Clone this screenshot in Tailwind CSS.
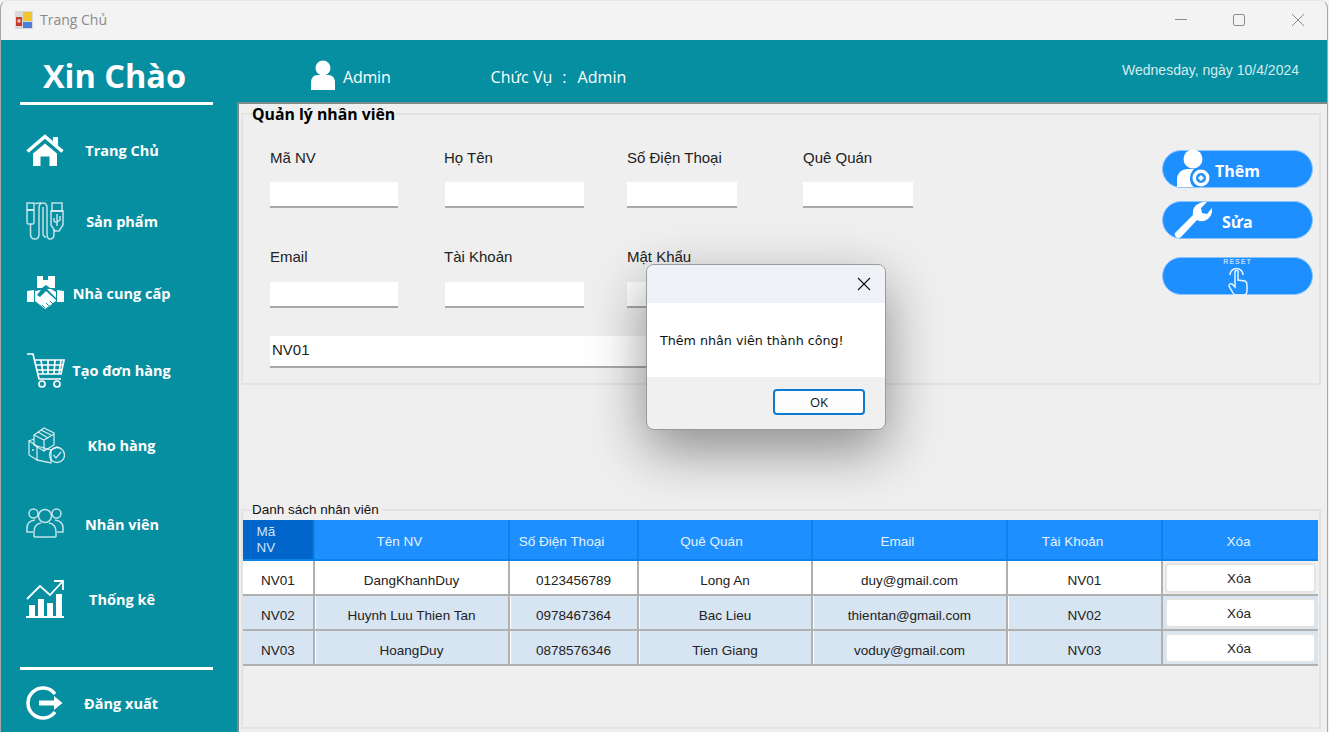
<!DOCTYPE html>
<html lang="vi">
<head>
<meta charset="utf-8">
<title>Trang Chủ</title>
<script src="https://cdn.jsdelivr.net/npm/@tailwindcss/browser@4"></script>
</head>
<body class="w-[1329px] h-[732px] overflow-hidden bg-[#f3f3f3] font-['Liberation_Sans',Arial,sans-serif]">
<div class="relative w-[1329px] h-[732px] overflow-hidden">
  <div class="flex flex-col w-[1328px] h-[740px] bg-[#f3f3f3] rounded-t-[8px] border-l border-r border-t border-l-[#a8a8a8] border-r-[#a8a8a8] border-t-[#e6e6e6]">
    <!-- title bar -->
    <div class="flex items-center h-[39px] shrink-0 pl-[14px] pb-[2px]">
      <svg class="w-[18px] h-[18px]" viewBox="0 0 18 18"><rect width="18" height="18" fill="#d9d9d9"/><rect x="1" y="6" width="6" height="9" fill="#c83a2e"/><rect x="2.500" y="8.500" width="3" height="3" fill="#f0d0c0"/><rect x="8" y="1" width="9" height="9" fill="#f3c52b"/><rect x="8" y="11" width="9" height="6" fill="#4d7fd6"/></svg>
      <span class="ml-[7px] text-[14px] text-[#8a8a8a] font-['Open_Sans',sans-serif]">Trang Chủ</span>
      <div class="ml-auto flex items-center">
        <svg class="w-[14px] h-[14px] mr-[44px]" viewBox="0 0 14 14"><path d="M1 6.500H13" stroke="#8a8a8a" stroke-width="1"/></svg>
        <svg class="w-[14px] h-[14px] mr-[45px]" viewBox="0 0 14 14"><rect x="1.500" y="1.500" width="11" height="11" rx="1.500" fill="none" stroke="#8a8a8a"/></svg>
        <svg class="w-[14px] h-[14px] mr-[22px]" viewBox="0 0 14 14"><path d="M1 1L13 13M13 1L1 13" stroke="#8a8a8a" stroke-width="1"/></svg>
      </div>
    </div>
    <div class="flex flex-1 min-h-0">
      <!-- sidebar -->
      <aside class="w-[236px] shrink-0 bg-[#068ea1] text-white flex flex-col items-stretch">
        <div class="h-[65px] ml-[19px] w-[193px] border-b-[3px] border-white flex items-center justify-center shrink-0 pr-[4px]">
          <span class="text-[32.500px] leading-none font-bold font-['Open_Sans',sans-serif] pt-[10px]">Xin Chào</span>
        </div>
        <div class="flex items-center h-[40px] pl-[25px] mt-[25px]">
          <svg class="w-[38px] h-[38px] shrink-0" viewBox="0 0 38 38" fill="#fff"><path d="M1.500 20.500L19 5.500L36.500 20.500" fill="none" stroke="#fff" stroke-width="3.600"/><rect x="27" y="6" width="5" height="8"/><path d="M7 22.500L19 12.500L31 22.500V35H23.500V25.500H14.500V35H7Z"/></svg>
          <span class="w-[116px] mt-[2px] text-center text-[14.500px] font-bold font-['Open_Sans',sans-serif]">Trang Chủ</span>
        </div>
        <div class="flex items-center h-[40px] pl-[25px] mt-[31px]">
          <svg class="w-[38px] h-[38px] shrink-0" viewBox="0 0 38 38" fill="none" stroke="#fff" stroke-opacity=".75" stroke-width="1.500"><rect x="1" y="1" width="7" height="7"/><rect x="1" y="8" width="7" height="14" rx="1.500"/><path d="M4.500 22V32Q4.500 37 9 37Q13 37 13 32V6Q13 1 17 1Q21 1 21 6V32Q21 37 24 37Q28 37 28 32V28"/><path d="M9 1.500Q13 1 15 1M17 5V31Q17 35 20 35"/><rect x="26" y="1" width="10" height="8"/><path d="M25 9H37V23L33 29H29L25 23Z"/><path d="M31 12V24M28 16V19L31 21M34 14V18L31 20"/></svg>
          <span class="w-[116px] mt-[2px] text-center text-[14.500px] font-bold font-['Open_Sans',sans-serif]">Sản phẩm</span>
        </div>
        <div class="flex items-center h-[40px] pl-[26px] mt-[32px]">
          <svg class="w-[37px] h-[38px] shrink-0" viewBox="0 0 37 38" fill="#fff"><path d="M10 2H28V14H23L19 11L15 14H10Z"/><rect x="16" y="2" width="5" height="4" fill="#068ea1"/><path d="M0 17L7 16V28H0Z"/><path d="M30 16L37 17V28H30Z"/><path d="M8 17L14 16L10 21L13 23L19 17L29 26V27L26 29L24 31L21 33L18 35L13 31L8 27Z"/><path d="M20 15H24L29 18V24L20 15Z"/><path d="M15 31L18 34M19 29L22 32M23 27L26 30" stroke="#068ea1" stroke-width="1"/></svg>
          <span class="w-[117px] mt-[2px] -ml-[1px] text-center text-[14.500px] font-bold font-['Open_Sans',sans-serif]">Nhà cung cấp</span>
        </div>
        <div class="flex items-center h-[40px] pl-[25px] mt-[37px]">
          <svg class="w-[40px] h-[38px] shrink-0" viewBox="0 0 40 38" fill="none" stroke="#fff" stroke-width="1.700"><path d="M1 3H7L13 28H35"/><path d="M9 9H38L35 23H12"/><path d="M15 9L17 23M22 9V23M29 9L28 23M35 9L33 23M10 14H37M11 19H36"/><circle cx="16" cy="33" r="3"/><circle cx="31" cy="33" r="3"/></svg>
          <span class="w-[111px] mt-[2px] text-center text-[14.500px] font-bold font-['Open_Sans',sans-serif]">Tạo đơn hàng</span>
        </div>
        <div class="flex items-center h-[40px] pl-[26px] mt-[35px]">
          <svg class="w-[38px] h-[38px] shrink-0" viewBox="0 0 38 38" fill="none" stroke="#fff" stroke-opacity=".8" stroke-width="1.300"><path d="M7 9L17 2L27 7V19L17 25L7 19Z"/><path d="M7 9L17 14L27 8M17 14V25M11 6L21 12M14 4L24 9"/><path d="M2 15L10 20V34L2 29Z"/><path d="M10 20L24 24V37L10 34M2 15L7 13M5 24H7"/><circle cx="30" cy="29" r="7.500"/><path d="M26.500 29L29 32L34 26"/><path d="M24 24L30 21L33 22"/></svg>
          <span class="w-[113px] mt-[2px] text-center text-[14.500px] font-bold font-['Open_Sans',sans-serif]">Kho hàng</span>
        </div>
        <div class="flex items-center h-[40px] pl-[25px] mt-[38px]">
          <svg class="w-[38px] h-[38px] shrink-0" viewBox="0 0 38 38" fill="none" stroke="#fff" stroke-opacity=".75" stroke-width="1.500"><circle cx="19" cy="12" r="6.500"/><path d="M8 33V28Q8 20 15 19M30 33V28Q30 20 23 19M8 33H30"/><circle cx="7.500" cy="9.500" r="4.500"/><circle cx="30.500" cy="9.500" r="4.500"/><path d="M9 16Q1 17 1 24V28H7M29 16Q37 17 37 24V28H31"/></svg>
          <span class="w-[116px] mt-[3px] text-center text-[14.500px] font-bold font-['Open_Sans',sans-serif]">Nhân viên</span>
        </div>
        <div class="flex items-center h-[40px] pl-[25px] mt-[36px]">
          <svg class="w-[38px] h-[38px] shrink-0" viewBox="0 0 38 38" fill="#fff"><path d="M1 19L14 6L24 15L36 2" fill="none" stroke="#fff" stroke-width="1.800"/><path d="M28 1H37V10" fill="none" stroke="#fff" stroke-width="1.800"/><rect x="3" y="25" width="6" height="11"/><rect x="12" y="19" width="6" height="17"/><rect x="21" y="23" width="6" height="13"/><rect x="30" y="14" width="6" height="22"/><rect y="36" width="38" height="2"/></svg>
          <span class="w-[116px] mt-[2px] text-center text-[14.500px] font-bold font-['Open_Sans',sans-serif]">Thống kê</span>
        </div>
        <div class="ml-[19px] w-[193px] h-[3px] bg-white mt-[48px] shrink-0"></div>
        <div class="flex items-center h-[40px] pl-[25px] mt-[13px]">
          <svg class="w-[38px] h-[38px] shrink-0" viewBox="0 0 38 38" fill="none" stroke="#fff" stroke-width="3.500"><path d="M29 10A15 15 0 1 0 29 28"/><path d="M13 19H32" stroke-width="5"/><path d="M28 12L36.500 19L28 26Z" fill="#fff" stroke="none"/></svg>
          <span class="w-[114px] mt-[2px] text-center text-[14.500px] font-bold font-['Open_Sans',sans-serif]">Đăng xuất</span>
        </div>
      </aside>
      <!-- main column -->
      <main class="flex-1 min-w-0 flex flex-col bg-[#efefef] border-l-2 border-[#7d8a8d]">
        <header class="h-[64px] shrink-0 -ml-[2px] bg-[#068ea1] border-b-2 border-[#7d8a8d] flex items-center text-white pl-[74px] pr-[28px]">
          <svg class="w-[24px] h-[30px] mt-[7px] shrink-0" viewBox="0 0 24 30" fill="#fff"><circle cx="12" cy="8" r="7.500"/><path d="M0 30V23Q0 15 7 15H17Q24 15 24 23V30Z"/></svg>
          <span class="ml-[8px] text-[16px] font-['Open_Sans',sans-serif] tracking-[-0.2px] mt-[11px]">Admin</span>
          <span class="ml-[100px] text-[16px] font-['Open_Sans',sans-serif] mt-[11px]">Chức Vụ<span class="ml-[10px]">:</span></span>
          <span class="ml-[11px] text-[16px] font-['Open_Sans',sans-serif] tracking-[0.1px] mt-[11px]">Admin</span>
          <span class="ml-auto text-[14px] text-[#d5ecef] -mt-[2px]">Wednesday, ngày 10/4/2024</span>
        </header>
        <!-- form group -->
        <fieldset class="ml-[2px] w-[1080px] h-[281px] border-2 border-[#e3e3e3] shrink-0">
          <legend class="ml-[9px] pr-[1px] h-[20px] leading-[20px] text-[15.800px] font-bold text-black font-['Open_Sans',sans-serif]">Quản lý nhân viên</legend>
          <div class="flex">
            <div class="pl-[27px] pt-[24px] text-[15px] text-[#222]">
              <div class="flex">
                <div class="w-[128px]"><div class="h-[20px] leading-[20px]">Mã NV</div><input class="mt-[14px] block w-full h-[26px] bg-white border-b-2 border-[#a8a8a8] outline-none"></div>
                <div class="w-[139px] ml-[47px]"><div class="h-[20px] leading-[20px] -ml-[1px]">Họ Tên</div><input class="mt-[14px] block w-full h-[26px] bg-white border-b-2 border-[#a8a8a8] outline-none"></div>
                <div class="w-[110px] ml-[43px]"><div class="h-[20px] leading-[20px]">Số Điện Thoại</div><input class="mt-[14px] block w-full h-[26px] bg-white border-b-2 border-[#a8a8a8] outline-none"></div>
                <div class="w-[110px] ml-[66px]"><div class="h-[20px] leading-[20px]">Quê Quán</div><input class="mt-[14px] block w-full h-[26px] bg-white border-b-2 border-[#a8a8a8] outline-none"></div>
              </div>
              <div class="flex mt-[39px]">
                <div class="w-[128px]"><div class="h-[20px] leading-[20px]">Email</div><input class="mt-[15px] block w-full h-[26px] bg-white border-b-2 border-[#a8a8a8] outline-none"></div>
                <div class="w-[139px] ml-[47px]"><div class="h-[20px] leading-[20px] -ml-[1px]">Tài Khoản</div><input class="mt-[15px] block w-full h-[26px] bg-white border-b-2 border-[#a8a8a8] outline-none"></div>
                <div class="w-[110px] ml-[43px]"><div class="h-[20px] leading-[20px]">Mật Khẩu</div><input class="mt-[15px] block w-full h-[26px] bg-white border-b-2 border-[#a8a8a8] outline-none"></div>
              </div>
              <input value="NV01" class="mt-[28px] block w-[440px] h-[32px] pl-[2px] pb-[4px] bg-white border-b-2 border-[#a8a8a8] outline-none text-[#222]">
            </div>
            <div class="ml-auto mr-[6px] pt-[26px] flex flex-col text-white">
              <div class="w-[151px] h-[38px] rounded-full bg-[#1e8fff] border border-[#8cc4ff] flex items-center overflow-visible pl-[13px]">
                <svg class="w-[36px] h-[40px] shrink-0" viewBox="0 0 36 40" fill="#fff"><circle cx="17" cy="10" r="9.500"/><path d="M1 38V31Q1 21 11 20H18Q14 24 14 30Q14 35 18 38Z"/><circle cx="25" cy="29" r="8.500"/><circle cx="25" cy="29" r="5" fill="#1e8fff"/><path d="M23.800 26.500H26.200V27.800H27.500V30.200H26.200V31.500H23.800V30.200H22.500V27.800H23.800Z"/></svg>
                <span class="ml-[3px] text-[16px] font-bold font-['Open_Sans',sans-serif] mt-[3px]">Thêm</span>
              </div>
              <div class="w-[151px] h-[38px] mt-[13px] rounded-full bg-[#1e8fff] border border-[#8cc4ff] flex items-center pl-[11px]">
                <svg class="w-[38px] h-[38px] shrink-0" viewBox="0 0 38 38" fill="#fff"><path d="M1 32L19 14Q18 6 24 3Q29 0 33 1L27 7L28 12L33 13L38 7Q39 14 34 18Q28 22 23 19L7 36Q4 38 2 36Q0 34 1 32Z"/></svg>
                <span class="ml-[10px] text-[16px] font-bold font-['Open_Sans',sans-serif] mt-[3px]">Sửa</span>
              </div>
              <div class="relative w-[151px] h-[38px] mt-[18px] rounded-full bg-[#1e8fff] border border-[#8cc4ff] flex flex-col items-center">
                <span class="absolute top-[0px] text-[7px] leading-[8px] font-bold tracking-[1px] text-[#bcdcff]">RESET</span>
                <svg class="absolute top-[8px] w-[22px] h-[30px]" viewBox="0 0 22 30" fill="none" stroke="#e8f4ff" stroke-width="1.500"><path d="M3 9A6.500 6.500 0 0 1 16 9"/><path d="M8 13V5.500Q9.500 3 11 5.500V14L18 15Q20 16 20 19V25Q20 29 16 29H9Q7 29 6 27L2 20Q2 17 5 18L8 21Z"/></svg>
              </div>
            </div>
          </div>
        </fieldset>
        <!-- list group -->
        <fieldset class="ml-[2px] mt-[115px] w-[1080px] h-[229px] border-2 border-[#e3e3e3] shrink-0">
          <legend class="ml-[9px] pr-[2px] h-[20px] leading-[20px] text-[13.500px] text-[#111]">Danh sách nhân viên</legend>
          <div class="grid grid-cols-[70px_195px_129px_174px_195px_155px_157px] w-[1075px] text-[13.500px] text-[#222] text-center">
            <div class="h-[41px] bg-[#0066cc] text-[#cfe3f7] leading-[16px] pt-[4px] pr-[24px] border-b-2 border-[#0a84e8]">Mã<br>NV</div>
            <div class="h-[41px] bg-[#1e8fff] text-[#e6f2ff] flex items-center justify-center border-l-2 border-b-2 border-[#0a84e8] pr-[24px] pt-[5px]">Tên NV</div>
            <div class="h-[41px] bg-[#1e8fff] text-[#e6f2ff] flex items-center justify-center border-l-2 border-b-2 border-[#0a84e8] pr-[24px] pt-[5px]">Số Điện Thoại</div>
            <div class="h-[41px] bg-[#1e8fff] text-[#e6f2ff] flex items-center justify-center border-l-2 border-b-2 border-[#0a84e8] pr-[27px] pt-[5px]">Quê Quán</div>
            <div class="h-[41px] bg-[#1e8fff] text-[#e6f2ff] flex items-center justify-center border-l-2 border-b-2 border-[#0a84e8] pr-[24px] pt-[5px]">Email</div>
            <div class="h-[41px] bg-[#1e8fff] text-[#e6f2ff] flex items-center justify-center border-l-2 border-b-2 border-[#0a84e8] pr-[24px] pt-[5px]">Tài Khoản</div>
            <div class="h-[41px] bg-[#1e8fff] text-[#e6f2ff] flex items-center justify-center border-l-2 border-b-2 border-[#0a84e8] pr-[4px] pt-[5px]">Xóa</div>

            <div class="h-[35px] pt-[7px] bg-white flex items-center justify-center border-b-2 border-[#b0b0b0]">NV01</div>
            <div class="h-[35px] pt-[7px] bg-white flex items-center justify-center border-l-2 border-b-2 border-[#b0b0b0]">DangKhanhDuy</div>
            <div class="h-[35px] pt-[7px] bg-white flex items-center justify-center border-l-2 border-b-2 border-[#b0b0b0]">0123456789</div>
            <div class="h-[35px] pt-[7px] bg-white flex items-center justify-center border-l-2 border-b-2 border-[#b0b0b0]">Long An</div>
            <div class="h-[35px] pt-[7px] bg-white flex items-center justify-center border-l-2 border-b-2 border-[#b0b0b0]">duy@gmail.com</div>
            <div class="h-[35px] pt-[7px] bg-white flex items-center justify-center border-l-2 border-b-2 border-[#b0b0b0]">NV01</div>
            <div class="h-[35px] bg-[#f0f0f0] flex items-center justify-center border-l-2 border-b-2 border-[#b0b0b0] px-[2px]"><button class="w-full h-[30px] pt-[3px] pr-[3px] bg-white rounded-[4px] border-2 border-[#e4e4e4] text-[#222]">Xóa</button></div>

            <div class="h-[35px] pt-[7px] bg-[#d7e4f2] flex items-center justify-center border-b-2 border-[#b0b0b0]">NV02</div>
            <div class="h-[35px] pt-[7px] bg-[#d7e4f2] shadow-[inset_1px_0_0_#fff] flex items-center justify-center border-l-2 border-b-2 border-[#b0b0b0]">Huynh Luu Thien Tan</div>
            <div class="h-[35px] pt-[7px] bg-[#d7e4f2] shadow-[inset_1px_0_0_#fff] flex items-center justify-center border-l-2 border-b-2 border-[#b0b0b0]">0978467364</div>
            <div class="h-[35px] pt-[7px] bg-[#d7e4f2] shadow-[inset_1px_0_0_#fff] flex items-center justify-center border-l-2 border-b-2 border-[#b0b0b0]">Bac Lieu</div>
            <div class="h-[35px] pt-[7px] bg-[#d7e4f2] shadow-[inset_1px_0_0_#fff] flex items-center justify-center border-l-2 border-b-2 border-[#b0b0b0]">thientan@gmail.com</div>
            <div class="h-[35px] pt-[7px] bg-[#d7e4f2] shadow-[inset_1px_0_0_#fff] flex items-center justify-center border-l-2 border-b-2 border-[#b0b0b0]">NV02</div>
            <div class="h-[35px] bg-[#d7e4f2] flex items-center justify-center border-l-2 border-b-2 border-[#b0b0b0] px-[2px]"><button class="w-full h-[30px] pt-[3px] pr-[3px] bg-white rounded-[4px] border-2 border-[#e4e4e4] text-[#222]">Xóa</button></div>

            <div class="h-[35px] pt-[7px] bg-[#d7e4f2] flex items-center justify-center border-b-2 border-[#b0b0b0]">NV03</div>
            <div class="h-[35px] pt-[7px] bg-[#d7e4f2] shadow-[inset_1px_0_0_#fff] flex items-center justify-center border-l-2 border-b-2 border-[#b0b0b0]">HoangDuy</div>
            <div class="h-[35px] pt-[7px] bg-[#d7e4f2] shadow-[inset_1px_0_0_#fff] flex items-center justify-center border-l-2 border-b-2 border-[#b0b0b0]">0878576346</div>
            <div class="h-[35px] pt-[7px] bg-[#d7e4f2] shadow-[inset_1px_0_0_#fff] flex items-center justify-center border-l-2 border-b-2 border-[#b0b0b0]">Tien Giang</div>
            <div class="h-[35px] pt-[7px] bg-[#d7e4f2] shadow-[inset_1px_0_0_#fff] flex items-center justify-center border-l-2 border-b-2 border-[#b0b0b0]">voduy@gmail.com</div>
            <div class="h-[35px] pt-[7px] bg-[#d7e4f2] shadow-[inset_1px_0_0_#fff] flex items-center justify-center border-l-2 border-b-2 border-[#b0b0b0]">NV03</div>
            <div class="h-[35px] bg-[#d7e4f2] flex items-center justify-center border-l-2 border-b-2 border-[#b0b0b0] px-[2px]"><button class="w-full h-[30px] pt-[3px] pr-[3px] bg-white rounded-[4px] border-2 border-[#e4e4e4] text-[#222]">Xóa</button></div>
          </div>
        </fieldset>
      </main>
    </div>
  </div>
  <!-- message box -->
  <div class="absolute left-[646px] top-[264px] w-[240px] h-[166px] flex flex-col rounded-[8px] overflow-hidden border border-[#9a9a9a] bg-[#f0f0f0] shadow-[0_20px_55px_rgba(0,0,0,0.42)]">
    <div class="h-[38px] shrink-0 bg-[#eef2f6] flex items-center justify-end pr-[14px]">
      <svg class="w-[14px] h-[14px]" viewBox="0 0 14 14"><path d="M1 1L13 13M13 1L1 13" stroke="#111" stroke-width="1.100"/></svg>
    </div>
    <div class="h-[74px] shrink-0 bg-white flex items-center pl-[13px] pt-[2px] text-[12.700px] text-[#111] font-['DejaVu_Sans',sans-serif]">Thêm nhân viên thành công!</div>
    <div class="flex-1 flex justify-end items-start pt-[12px] pr-[20px]">
      <button class="w-[92px] h-[26px] rounded-[4px] border-2 border-[#0f7ad1] bg-[#fdfdfd] text-[13px] text-[#111] font-['Open_Sans',sans-serif] pt-[1px]">OK</button>
    </div>
  </div>
</div>
</body>
</html>
